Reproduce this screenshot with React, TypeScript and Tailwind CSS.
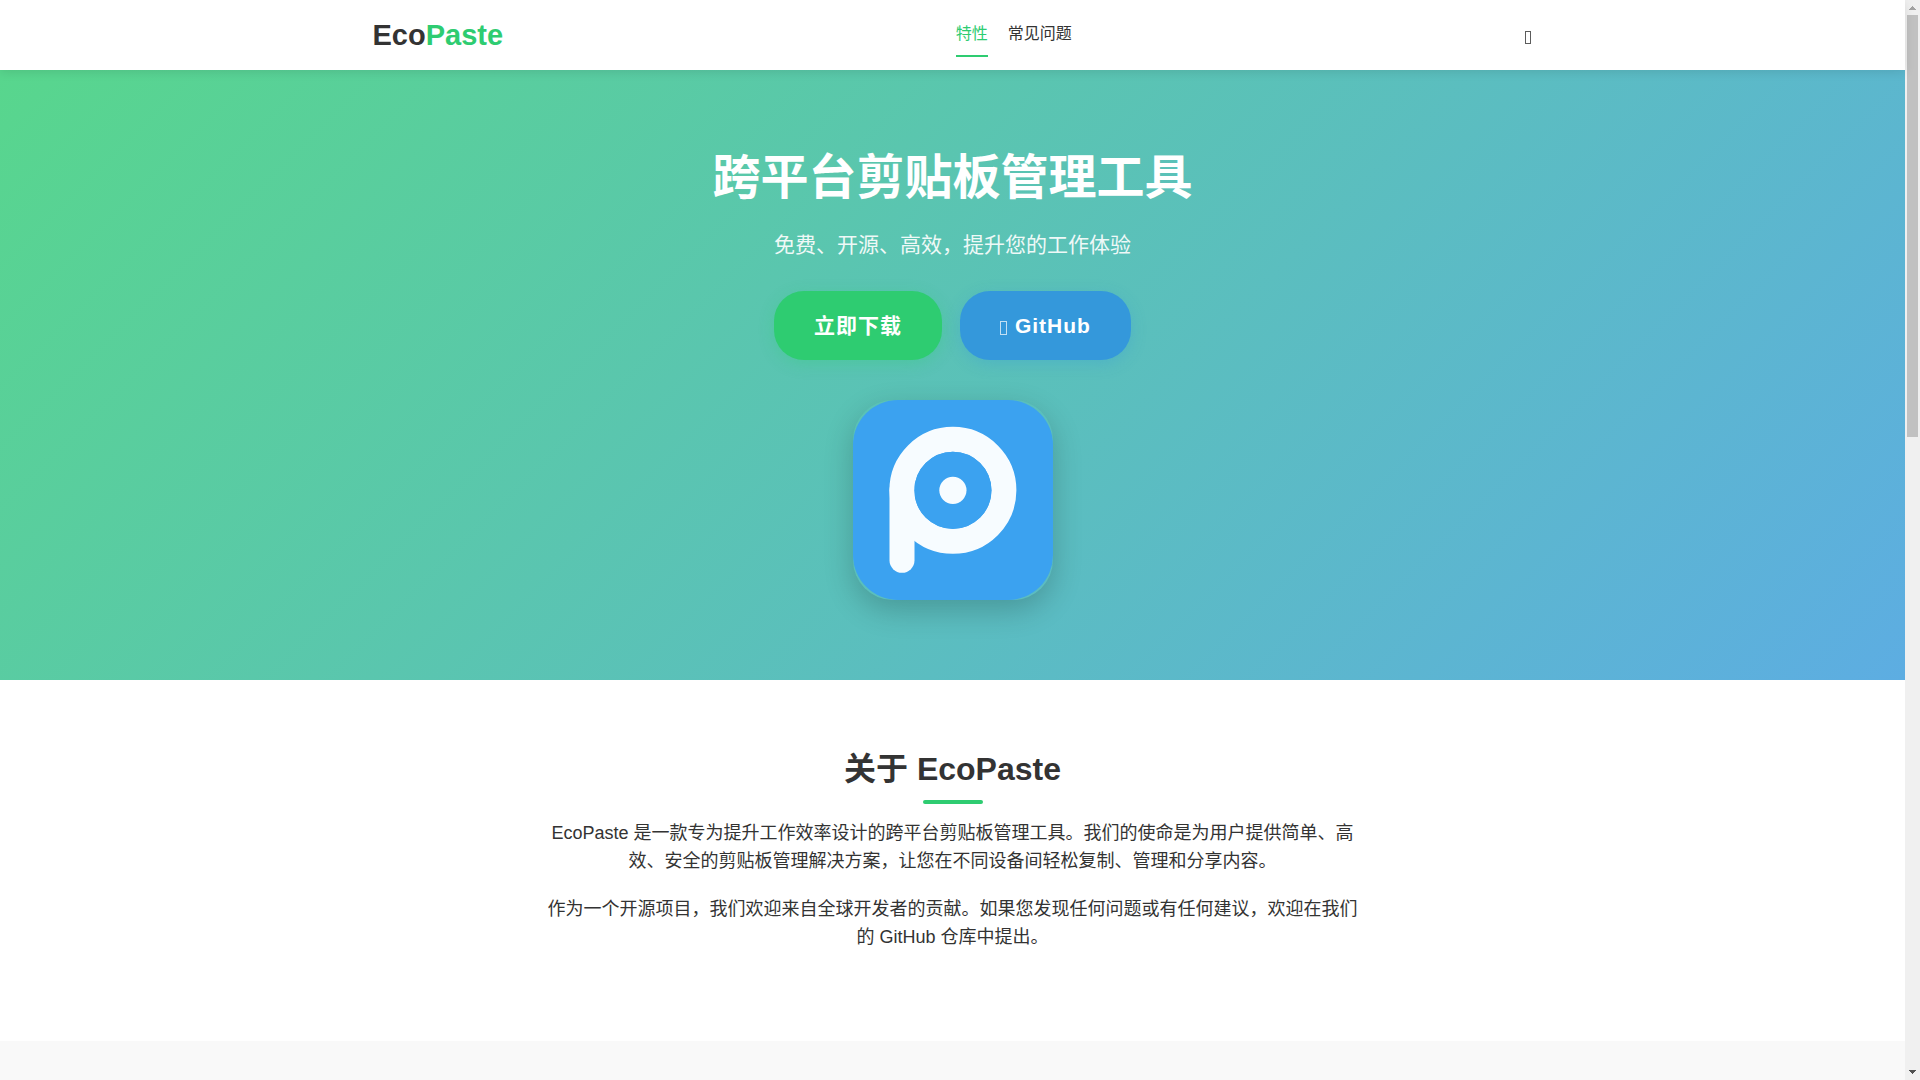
import { ReactNode } from "react";

interface NavItem {
  label: string;
  href: string;
  active?: boolean;
}

interface HeroLinkProps {
  href: string;
  className: string;
  children: ReactNode;
}

const NAV_ITEMS: NavItem[] = [
  { label: "特性", href: "#features", active: true },
  { label: "常见问题", href: "#faq" },
];

const ABOUT_PARAGRAPHS = [
  "EcoPaste 是一款专为提升工作效率设计的跨平台剪贴板管理工具。我们的使命是为用户提供简单、高效、安全的剪贴板管理解决方案，让您在不同设备间轻松复制、管理和分享内容。",
  "作为一个开源项目，我们欢迎来自全球开发者的贡献。如果您发现任何问题或有任何建议，欢迎在我们的 GitHub 仓库中提出。",
];

function Header() {
  return (
    <header className="relative z-10 bg-white shadow-[0_2px_10px_rgba(0,0,0,0.1)]">
      <div className="mx-auto flex h-[70px] max-w-[1200px] items-center justify-between px-5">
        <a href="#top" className="text-[29px] font-bold leading-[46px] text-[#333333]">
          Eco<span className="text-[#2ecc71]">Paste</span>
        </a>
        <nav className="flex gap-5 leading-[26px]">
          {NAV_ITEMS.map((item) => (
            <a
              key={item.label}
              href={item.href}
              className={`border-b-2 py-2 ${
                item.active
                  ? "border-[#2ecc71] text-[#2ecc71]"
                  : "border-transparent text-[#333333]"
              }`}
            >
              {item.label}
            </a>
          ))}
        </nav>
        <button type="button" aria-label="切换主题" className="flex px-px pt-1">
          <span className="h-[13px] w-1.5 border border-[#333333]/80" />
        </button>
      </div>
    </header>
  );
}

function HeroLink({ href, className, children }: HeroLinkProps) {
  return (
    <a
      href={href}
      className={`rounded-[30px] px-10 py-[18px] text-[21px] font-bold leading-[33px] tracking-[1px] ${className}`}
    >
      {children}
    </a>
  );
}

function AppLogo() {
  return (
    <svg
      viewBox="0 0 200 200"
      role="img"
      aria-label="EcoPaste Logo"
      className="mt-10 size-[200px] rounded-[40px] shadow-[0_10px_30px_rgba(0,0,0,0.2)]"
    >
      <rect width="200" height="200" rx="45" fill="#3ba2f0" />
      <circle cx="99.9" cy="90.3" r="51" fill="none" stroke="#f7fcff" strokeWidth="25" />
      <path
        d="M49 90.3V160.3"
        stroke="#f7fcff"
        strokeWidth="25"
        strokeLinecap="round"
      />
      <circle cx="99.9" cy="90.3" r="38.6" fill="#3ba2f0" />
      <circle cx="99.9" cy="90.3" r="13.6" fill="#f7fcff" />
    </svg>
  );
}

function Hero() {
  return (
    <section className="flex flex-col items-center bg-[linear-gradient(135deg,#58d68d,#5dade2)] py-20 text-white">
      <h1 className="text-5xl font-bold leading-[56px]">跨平台剪贴板管理工具</h1>
      <p className="mt-[22px] text-[21px] leading-[33px] opacity-90">
        免费、开源、高效，提升您的工作体验
      </p>
      <div className="mt-[30px] flex gap-[18px]">
        <HeroLink
          href="#download"
          className="bg-[#2ecc71] shadow-[0_4px_15px_rgba(46,204,113,0.3)]"
        >
          立即下载
        </HeroLink>
        <HeroLink
          href="#github"
          className="bg-[#3498db] shadow-[0_4px_15px_rgba(52,152,219,0.3)]"
        >
          <span className="mr-px inline-block h-[14px] w-[7px] border border-white/70 align-[-2px]" />{" "}
          GitHub
        </HeroLink>
      </div>
      <AppLogo />
    </section>
  );
}

function About() {
  return (
    <section className="flex flex-col items-center bg-white pb-[90px] pt-[63px] text-center text-[#333333]">
      <h2 className="text-[32px] font-bold leading-[52px]">关于 EcoPaste</h2>
      <div className="mt-[5px] h-1 w-[60px] rounded-[2px] bg-[#2ecc71]" />
      <div className="mt-[15px] max-w-[815px] space-y-5 text-lg leading-7">
        {ABOUT_PARAGRAPHS.map((text) => (
          <p key={text}>{text}</p>
        ))}
      </div>
    </section>
  );
}

function ScrollBar() {
  return (
    <div aria-hidden="true" className="flex w-[15px] shrink-0 flex-col items-center bg-[#f0f0f0]">
      <svg viewBox="0 0 15 15" className="size-[15px] shrink-0" shapeRendering="crispEdges">
        <path d="M7 6h1v1h1v1h1v1h1v1H4V9h1V8h1V7h1z" fill="#a3a3a3" />
      </svg>
      <div className="w-full grow px-0.5">
        <div className="h-[40.2%] w-[11px] bg-[#c1c1c1]" />
      </div>
      <svg viewBox="0 0 15 15" className="size-[15px] shrink-0" shapeRendering="crispEdges">
        <path d="M4 5h7v1h-1v1H9v1H8v1H7V8H6V7H5V6H4z" fill="#505050" />
      </svg>
    </div>
  );
}

export default function App() {
  return (
    <div
      id="top"
      className="flex h-screen overflow-hidden bg-[#f9f9f9] font-['Liberation_Sans','Noto_Sans_CJK_SC',sans-serif]"
    >
      <main className="min-w-0 grow">
        <Header />
        <Hero />
        <About />
      </main>
      <ScrollBar />
    </div>
  );
}
